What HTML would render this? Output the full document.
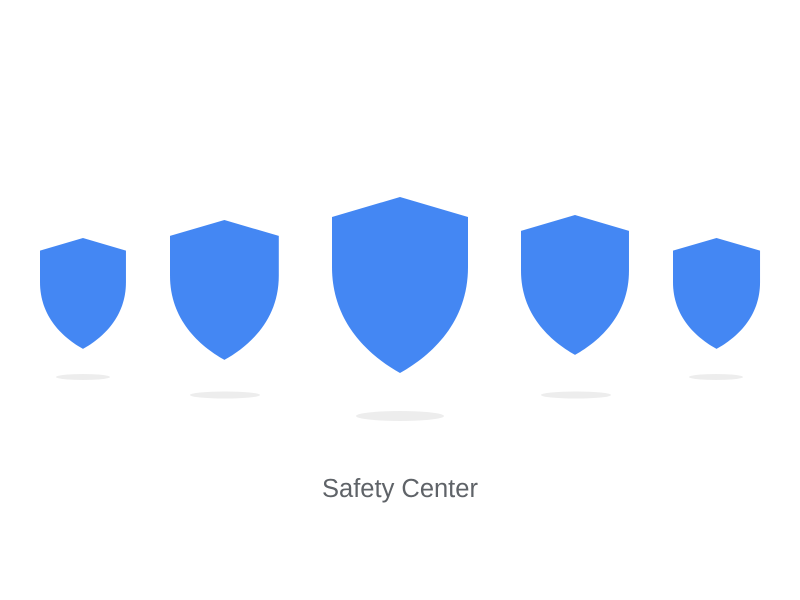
<!DOCTYPE html>
<html><head><style>
html,body{margin:0;padding:0;background:#fff;width:800px;height:600px;overflow:hidden}
.t{position:absolute;left:0;width:800px;top:475px;text-align:center;font-family:"Liberation Sans",sans-serif;font-size:25.5px;color:#5f6368}
</style></head><body>
<svg width="800" height="600" style="position:absolute;left:0;top:0">
<defs><path id="s" d="M0,20 L68,0 L136,20 L136,70 C136,125 100,158 68,176 C36,158 0,125 0,70 Z" fill="#4487f3"/></defs>
<g fill="#ededed">
<ellipse cx="83" cy="377" rx="27" ry="3"/>
<ellipse cx="225" cy="395" rx="35" ry="3.5"/>
<ellipse cx="400" cy="416" rx="44" ry="5"/>
<ellipse cx="576" cy="395" rx="35" ry="3.5"/>
<ellipse cx="716" cy="377" rx="27" ry="3"/>
</g>
<use href="#s" transform="translate(40,238) scale(0.632,0.63)"/>
<use href="#s" transform="translate(170,220) scale(0.80,0.795)"/>
<use href="#s" transform="translate(332,197)"/>
<use href="#s" transform="translate(521,215) scale(0.794,0.795)"/>
<use href="#s" transform="translate(673,238) scale(0.64,0.63)"/>
</svg>
<div class="t">Safety Center</div>
</body></html>
